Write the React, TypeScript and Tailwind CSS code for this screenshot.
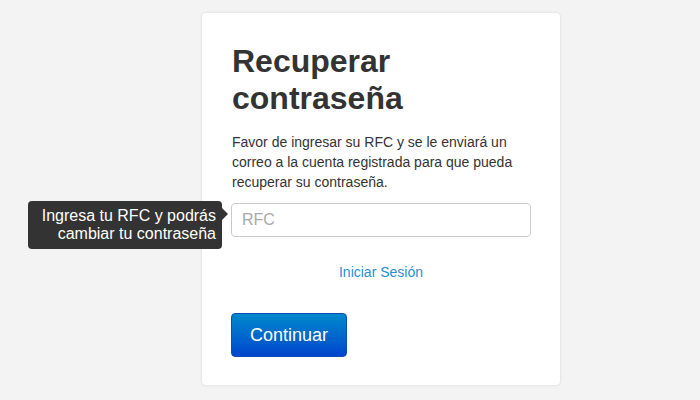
export default function App() {
  return (
    <div
      className="min-h-[400px] w-[700px] bg-[#f3f3f3] pt-[13px]"
      style={{ fontFamily: "'Liberation Sans', Arial, sans-serif" }}
    >
      <div className="ml-[202px] w-[358px] rounded-[4px] bg-white px-[30px] pb-[28px] pt-[30px] shadow-[0_0_3px_rgba(0,0,0,0.13)]">
        <h1 className="text-[32px] font-bold leading-[37px] text-[#333]">
          Recuperar
          <br />
          contraseña
        </h1>
        <p className="mt-[15px] text-[14px] leading-[20px] text-[#333]">
          Favor de ingresar su RFC y se le enviará un correo a la cuenta registrada para que pueda
          recuperar su contraseña.
        </p>

        <div className="relative ml-[-1px] mt-[11px]">
          <input
            type="text"
            placeholder="RFC"
            className="h-[34px] w-[300px] rounded-[4px] border border-[#cccccc] px-[10px] text-[16px] text-[#555] outline-none placeholder:text-[#a9a9a9]"
          />
          {/* tooltip */}
          <div className="absolute right-[308px] top-[-2px] w-[194px] rounded-[4px] bg-[#333] py-[6px] pr-[6px] text-right text-[16px] leading-[18px] text-white">
            Ingresa tu RFC y podrás
            <br />
            cambiar tu contraseña
            <span className="absolute right-[-6px] top-[7px] h-0 w-0 border-y-[6px] border-l-[6px] border-y-transparent border-l-[#333]" />
          </div>
        </div>

        <div className="mt-[25px] text-center text-[14px] leading-[20px]">
          <a href="#" className="text-[#2a8fd4]">
            Iniciar Sesión
          </a>
        </div>

        <button className="ml-[-1px] mt-[31px] h-[44px] w-[116px] rounded-[4px] border border-[#0a4fb8] bg-linear-to-b from-[#0088cc] to-[#0044cc] text-[18px] text-white">
          Continuar
        </button>
      </div>
    </div>
  );
}
